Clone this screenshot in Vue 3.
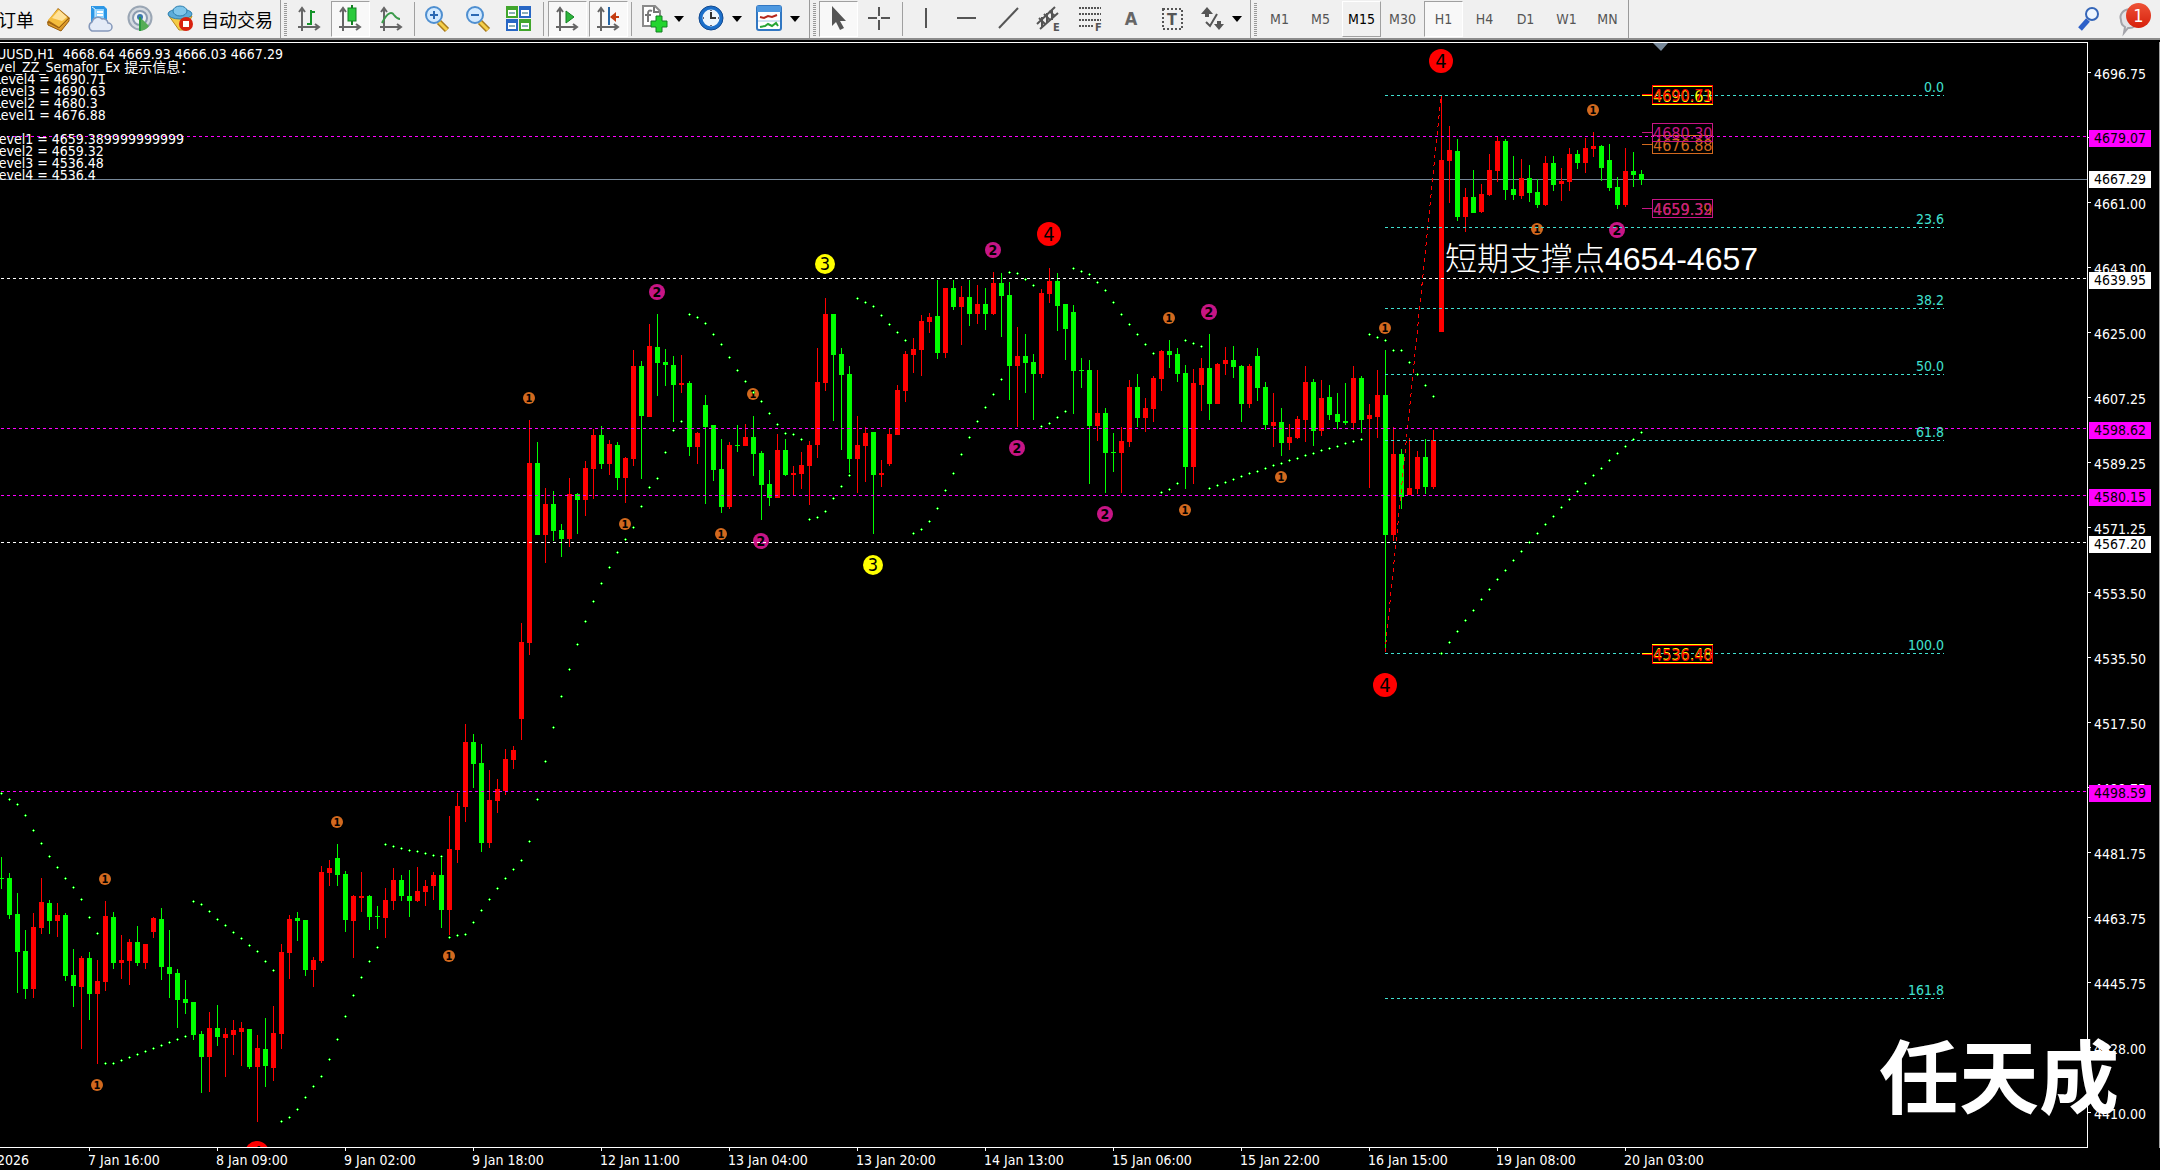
<script setup>
// Candles: [high, bodyTop, bodyBottom, low, rising]; one candle every 8px
const raw = [
  [857,878,879,889,0],[873,878,915,919,0],[893,914,952,993,0],[930,951,989,999,0],[913,927,989,998,1],[878,902,928,934,1],
  [900,903,921,934,0],[903,915,921,937,1],[913,915,976,981,0],[949,975,986,1007,0],[956,958,987,1049,1],[952,958,994,1020,0],
  [960,981,994,1064,1],[901,916,982,991,1],[912,917,963,969,0],[935,960,963,979,1],[939,942,961,985,1],[926,942,963,966,0],
  [944,944,963,969,1],[917,918,932,938,1],[908,919,967,980,0],[930,967,974,998,0],[969,973,1000,1028,0],[980,999,1003,1014,0],
  [1002,1002,1035,1040,0],[1031,1034,1057,1093,0],[1012,1028,1057,1092,1],[1005,1028,1037,1046,0],[1028,1034,1038,1077,1],[1020,1030,1035,1055,1],
  [1022,1028,1032,1066,1],[1029,1029,1067,1069,0],[1035,1048,1067,1122,1],[1018,1049,1066,1087,0],[1006,1033,1068,1081,1],[944,952,1034,1049,1],
  [915,919,953,979,1],[912,918,921,941,0],[920,920,970,976,0],[957,960,970,987,1],[866,872,961,963,1],[860,868,873,886,1],
  [844,858,875,886,0],[871,874,920,932,0],[895,896,921,958,1],[872,896,898,912,1],[895,896,917,930,0],[906,916,917,929,0],
  [888,900,918,938,1],[868,880,901,910,1],[875,880,896,901,0],[870,896,901,917,0],[867,891,901,902,1],[880,886,892,906,1],
  [872,875,886,900,1],[856,875,910,928,0],[816,849,910,935,1],[793,806,850,863,1],[724,742,807,822,1],[734,742,764,788,0],
  [744,763,843,852,0],[770,800,843,848,1],[779,789,801,813,1],[749,759,791,795,1],[746,750,760,769,1],[623,642,719,740,1],
  [420,463,643,655,1],[442,463,535,535,0],[488,504,535,563,1],[491,504,531,541,0],[524,530,539,557,0],[478,494,539,547,1],
  [493,494,500,534,0],[461,468,500,516,1],[429,435,469,499,1],[426,435,464,469,0],[440,444,464,475,1],[442,445,478,490,0],
  [457,458,478,503,1],[350,366,459,466,1],[361,366,416,479,0],[324,346,417,417,1],[314,347,363,396,0],[349,362,365,386,0],
  [356,365,385,422,0],[355,383,385,393,1],[381,383,447,456,0],[432,433,447,464,1],[395,405,427,504,0],[425,425,470,481,0],
  [439,469,507,513,0],[442,445,507,509,1],[425,445,446,452,0],[424,437,446,446,1],[416,437,454,476,0],[451,453,485,520,0],
  [470,484,498,506,0],[434,450,498,498,1],[439,450,475,476,0],[466,473,475,495,1],[452,465,474,489,1],[441,445,466,505,1],
  [348,382,445,458,1],[298,314,383,391,1],[314,314,355,421,0],[348,354,375,450,0],[366,374,459,473,0],[416,445,459,493,1],
  [427,433,446,482,1],[432,432,475,534,0],[460,473,475,487,1],[428,434,464,466,1],[385,390,435,435,1],[351,354,391,402,1],
  [338,349,355,373,1],[315,321,350,376,1],[313,317,322,333,1],[280,316,353,359,0],[288,288,353,358,1],[280,288,307,310,0],
  [286,297,307,345,1],[280,297,314,326,0],[285,304,314,324,1],[288,304,314,330,0],[272,283,314,315,1],[273,283,296,337,0],
  [282,295,366,400,0],[327,356,366,427,1],[334,356,363,393,0],[354,362,374,420,0],[289,293,374,378,1],[268,281,294,303,1],
  [273,281,306,331,0],[304,304,329,360,0],[305,312,371,414,0],[358,370,371,388,0],[360,370,426,484,0],[370,413,426,441,1],
  [408,413,453,493,0],[433,452,453,472,0],[427,441,453,493,1],[380,387,442,447,1],[374,387,418,427,0],[398,408,418,432,1],
  [376,378,409,422,1],[350,351,379,391,1],[340,351,355,368,0],[348,354,374,382,0],[365,373,467,489,0],[369,383,467,484,1],
  [358,368,385,411,1],[334,368,404,420,0],[363,364,404,404,1],[347,360,364,375,1],[346,360,367,378,0],[365,366,404,422,0],
  [364,366,404,408,1],[348,356,388,401,0],[382,387,425,430,0],[393,422,426,447,1],[408,422,443,456,0],[424,437,443,450,1],
  [416,419,438,439,1],[366,382,420,442,1],[379,382,431,446,0],[380,398,431,436,1],[385,397,415,420,0],[393,414,422,429,0],
  [383,421,423,425,0],[366,378,423,430,1],[376,378,420,433,0],[404,415,419,488,1],[370,395,417,438,1],[350,395,535,651,0],
  [427,454,535,541,1],[449,454,497,509,0],[438,488,495,495,1],[451,457,489,494,1],[439,457,487,494,0],[430,440,487,489,1],
  [96,160,332,332,1],[126,150,161,203,1],[139,151,217,221,0],[188,197,217,232,1],[170,197,213,213,0],[184,194,212,213,1],
  [154,170,195,196,1],[137,141,171,182,1],[139,141,190,200,0],[156,189,195,200,0],[159,178,196,199,1],[165,178,193,202,0],
  [179,192,205,208,0],[156,163,205,206,1],[156,163,185,191,0],[168,181,184,201,1],[148,154,182,191,1],[150,154,163,169,0],
  [138,148,163,173,1],[132,146,149,157,1],[145,146,168,181,0],[144,160,188,191,0],[177,187,205,209,0],[148,171,205,207,1],
  [152,171,175,187,0],[170,174,180,185,0],
]
const candles = raw.map(([high, top, bottom, low, rising], i) => ({
  x: 1 + 8 * i, high, top, bottom, low, color: rising ? '#ff0000' : '#00ff00',
}))

// Parabolic SAR, one value per candle
const sar = [
  793,799,804,815,830,843,856,867,878,887,899,917,933,
  1063,1063,1060,1057,1054,1051,1048,1045,1042,1039,1036,
  901,904,911,919,925,932,938,945,951,961,970,
  1121,1117,1109,1097,1086,1076,1059,1039,1016,995,977,961,947,
  844,846,848,850,851,853,855,856,
  937,935,934,922,910,899,888,878,869,860,841,799,761,727,696,
  669,644,621,601,583,567,552,539,527,506,487,478,452,430,421,
  314,317,323,334,344,357,370,381,392,401,413,424,433,434,439,
  519,517,511,498,486,475,
  298,302,306,315,324,332,340,
  533,529,521,508,490,473,454,437,421,407,394,379,
  272,273,279,285,426,423,417,411,
  268,271,274,282,290,302,314,324,334,344,353,
  492,489,483,340,343,346,
  488,485,482,479,476,473,471,468,465,463,460,458,455,453,450,448,446,443,441,439,
  334,337,340,350,350,362,374,385,396,
  653,642,631,620,610,599,589,579,570,560,551,542,533,524,516,507,499,491,483,475,468,460,453,446,439,432,
]

const levels = [
  { y: 136, color: '#ff00ff' }, { y: 278, color: '#ffffff' }, { y: 428, color: '#ff00ff' },
  { y: 495, color: '#ff00ff' }, { y: 542, color: '#ffffff' }, { y: 791, color: '#ff00ff' },
]

const fib = [
  { y: 95, label: '0.0' }, { y: 227, label: '23.6' }, { y: 308, label: '38.2' }, { y: 374, label: '50.0' },
  { y: 440, label: '61.8' }, { y: 653, label: '100.0' }, { y: 998, label: '161.8' },
]

const markerStyle = {
  1: { r: 6, color: '#d2691e', size: 11, dy: 4 },
  2: { r: 8, color: '#c71585', size: 14, dy: 5 },
  3: { r: 10, color: '#ffff00', size: 18, dy: 6 },
  4: { r: 12, color: '#ff0000', size: 20, dy: 7 },
}
const markers = [
  [1,337,822],[1,105,879],[1,97,1085],[1,449,956],[1,529,398],[1,625,524],[1,721,534],[1,753,394],
  [1,1169,318],[1,1281,477],[1,1185,510],[1,1385,328],[1,1593,110],[1,1537,229],
  [2,657,292],[2,993,250],[2,761,541],[2,1017,448],[2,1209,312],[2,1105,514],[2,1617,230],
  [3,825,264],[3,873,565],
  [4,1049,234],[4,1385,685],[4,1441,61],[4,257,1153],
].map(([n, x, y]) => ({ n, x, y, ...markerStyle[n] }))

const priceBoxes = [
  { y: 95, label: '4690.63', color: '#ffff00' }, { y: 94, label: '4690.71', color: '#ff0000' },
  { y: 144, label: '4676.88', color: '#d2691e' }, { y: 132, label: '4680.30', color: '#c71585' },
  { y: 208, label: '4659.39', color: '#d2691e' }, { y: 208, label: '4659.32', color: '#c71585' },
  { y: 653, label: '4536.48', color: '#ffff00' }, { y: 654, label: '4536.40', color: '#ff0000' },
]

const prices = ['4696.75', '', '4661.00', '4643.00', '4625.00', '4607.25', '4589.25', '4571.25', '4553.50',
  '4535.50', '4517.50', '4499.75', '4481.75', '4463.75', '4445.75', '4428.00', '4410.00']

const tags = [
  { top: 88, label: '4679.07', kind: 'pink' }, { top: 129, label: '4667.29', kind: 'white' },
  { top: 230, label: '4639.95', kind: 'white' }, { top: 380, label: '4598.62', kind: 'pink' },
  { top: 447, label: '4580.15', kind: 'pink' }, { top: 494, label: '4567.20', kind: 'white' },
  { top: 743, label: '4498.59', kind: 'pink' },
]

const times = ['7 Jan 16:00', '8 Jan 09:00', '9 Jan 02:00', '9 Jan 18:00', '12 Jan 11:00', '13 Jan 04:00',
  '13 Jan 20:00', '14 Jan 13:00', '15 Jan 06:00', '15 Jan 22:00', '16 Jan 15:00', '19 Jan 08:00', '20 Jan 03:00']

const axes = '<path d="M6 4v22M2 22h20M3 7l3-4 3 4M19 19l4 3-4 3" fill="none" stroke="#666" stroke-width="2"/>'
const lens = '<path d="M16 17l8 8" stroke="#a87a1c" stroke-width="6"/><path d="M16 17l8 8" stroke="#f5cf4a" stroke-width="3"/><circle cx="11" cy="10" r="8" fill="#d3eaff" stroke="#4f8fd0" stroke-width="2"/>'
const icons = {
  gold: '<path d="M2 17L13 3l12 10-9 13-13-6z" fill="#a86a12"/><path d="M3 15L13 4l10 9-9 9z" fill="#f4bd3d"/><path d="M7 13l7-8 8 7-5 4z" fill="#ffe29a"/><path d="M3 17l11 6 10-10v3L16 26 3 20z" fill="#dc9a2a" stroke="#996012"/>',
  cloud: '<path d="M5 1h13l3 3v15H5z" fill="#2c97e6"/><path d="M9 4h9v12H9z" fill="#8fd3ff"/><path d="M6 2l3 2v13" fill="none" stroke="#d8f0ff"/><path d="M11 7h6M11 10h6" stroke="#fff" stroke-width="2"/><path d="M6 26a5 5 0 010-9 6 6 0 0110-3 5 5 0 016 4 4 4 0 010 8z" fill="#e4ebf7" stroke="#8598ba" stroke-width="1.5"/>',
  signal: '<circle cx="13" cy="13" r="11.500" fill="#d5dae0" stroke="#9aa6b4" stroke-width="2"/><circle cx="13" cy="13" r="7" fill="#eef1f4" stroke="#8b9bb0" stroke-width="2"/><path d="M13 12l9 9a12 12 0 01-9 5z" fill="#57ad57"/><circle cx="13" cy="12" r="3" fill="#3b77ae"/><path d="M13 12v14" stroke="#2b9a3e" stroke-width="2"/>',
  auto: '<path d="M2 11h23l-7 14h-6z" fill="#f5cb45" stroke="#b88a1c"/><ellipse cx="13" cy="9" rx="12" ry="5" fill="#5cacd9" stroke="#2d7fae"/><ellipse cx="13" cy="6" rx="7" ry="5" fill="#80c6eb" stroke="#2d7fae"/><circle cx="19" cy="19" r="7" fill="#d8210f"/><rect x="16" y="16" width="6" height="6" fill="#fff"/>',
  bars: axes + '<path d="M11 19h4M15 5v15M15 7h4" fill="none" stroke="#15942a" stroke-width="2"/>',
  candle: axes + '<path d="M15 0v20" stroke="#138022" stroke-width="2"/><rect x="11" y="3" width="8" height="13" fill="#2acb3c" stroke="#138022"/>',
  line: axes + '<path d="M4 18C10 6 14 7 16 10q3 4 6 4" fill="none" stroke="#3a9a4a" stroke-width="2"/>',
  zoomIn: lens + '<path d="M7 10h8M11 6v8" stroke="#2a69b4" stroke-width="2"/>',
  zoomOut: lens + '<path d="M7 10h8" stroke="#2a69b4" stroke-width="2"/>',
  tile: '<path d="M1 1h12v12H1zM14 14h12v12H14z" fill="#41a62d"/><path d="M14 1h12v12H14zM1 14h12v12H1z" fill="#2867c4"/><path d="M3 5h8v6H3zM16 5h8v6h-8zM3 18h8v6H3zM16 18h8v6h-8z" fill="#fff"/><path d="M4 8h6M17 8h6M4 21h6M17 21h6" stroke="#8bb0b8" stroke-width="2"/>',
  shift: axes + '<path d="M12 6l8 6-8 6z" fill="#2cb53c" stroke="#138022"/>',
  autoscroll: axes + '<path d="M14 2v18" stroke="#2465a5" stroke-width="2"/><path d="M16 12h8" stroke="#c43c10" stroke-width="2"/><path d="M15 12l6-5v10z" fill="#c43c10"/>',
  add: '<path d="M3 1h12l5 5v15H3z" fill="#fff" stroke="#8a8a8a" stroke-width="2"/><path d="M14 2v5h5M12 6q-4-2-4 3v8M5 10h6" fill="none" stroke="#777" stroke-width="2"/><path d="M16 11h6v5h5v6h-5v5h-6v-5h-5v-6h5z" fill="#22d52e" stroke="#138022"/>',
  clock: '<circle cx="13" cy="13" r="12" fill="#1b6fca" stroke="#12498f"/><circle cx="13" cy="13" r="8.500" fill="#edf5fc"/><path d="M13 7v6h5" fill="none" stroke="#333" stroke-width="2"/><path d="M13 5v1M13 20v1M5 13h1M20 13h1" stroke="#667" stroke-width="2"/>',
  template: '<rect x="1" y="1" width="24" height="24" rx="2" fill="#fff" stroke="#3177c2" stroke-width="2"/><path d="M1 1h24v6H1z" fill="#4d98e0"/><path d="M4 12l4 1 4-2 4 1 5-2" fill="none" stroke="#b5271c" stroke-width="2"/><path d="M2 16h22" stroke="#a8c6e6"/><path d="M4 22l5-1 3-2 4 2 4-3 2 3" fill="none" stroke="#28a536" stroke-width="2"/>',
  cursor: '<path d="M7 1v20l4-4 4 8 4-2-4-7h6z" fill="#555"/>',
  cross: '<path d="M13 2v9M13 15v10M2 13h9M15 13h9" stroke="#555" stroke-width="2"/>',
  vline: '<path d="M13 3v20" stroke="#555" stroke-width="2"/>',
  hline: '<path d="M3 13h19" stroke="#555" stroke-width="2"/>',
  slash: '<path d="M4 23L23 3" stroke="#555" stroke-width="2"/>',
  channel: '<path d="M1 19L19 2M4 24L22 8M6 12v10M11 8v10M16 5v10M3 13l6 6M8 9l6 6M13 6l6 5" stroke="#555" stroke-width="2"/><text x="17" y="26" font-size="11" font-weight="700" fill="#555">E</text>',
  fibo: '<path d="M2 3h22M2 9h22M2 15h22M2 21h14" stroke="#555" stroke-width="2" stroke-dasharray="2 1"/><text x="18" y="26" font-size="11" font-weight="700" fill="#555">F</text>',
  text: '<text x="13" y="20" font-size="18" font-weight="700" fill="#666" text-anchor="middle">A</text>',
  label: '<rect x="4" y="4" width="19" height="20" fill="none" stroke="#555" stroke-width="2" stroke-dasharray="2 2"/><text x="13" y="20" font-size="16" font-weight="700" fill="#555" text-anchor="middle">T</text>',
  arrows: '<path d="M1 9l6-7 6 7H9v3H5V9zM14 19h3v-3h4v3h3l-5 6z" fill="#555"/><path d="M6 17l4 4 7-12" fill="none" stroke="#555" stroke-width="2"/>',
  search: '<path d="M11 15l-8 9" stroke="#2d60c8" stroke-width="5"/><circle cx="15" cy="9" r="6" fill="#eef6ff" stroke="#3566b8" stroke-width="2"/>',
  chat: '<path d="M3 15a9 8 0 1117 0 9 8 0 01-10 8l-4 5 1-6a9 8 0 01-4-7z" fill="#e2e2e6" stroke="#a4a4aa" stroke-width="2"/>',
}

const trade = ['gold', 'cloud', 'signal']
const chartTypes = [['bars'], ['candle', true], ['line']]
const zooms = ['zoomIn', 'zoomOut', 'tile']
const draw = ['vline', 'hline', 'slash', 'channel', 'fibo', 'text', 'label']
const frames = ['M1', 'M5', 'M15', 'M30', 'H1', 'H4', 'D1', 'W1', 'MN']
</script>

<template>
  <div class="terminal">
    <header class="toolbar">
      <div class="group first">
        <button class="order">订单</button>
        <button v-for="name in trade" :key="name" class="tool"><svg v-html="icons[name]" /></button>
        <button class="auto"><svg v-html="icons.auto" />自动交易</button>
      </div>
      <div class="group">
        <i class="grip"></i>
        <button v-for="[name, on] in chartTypes" :key="name" class="tool" :class="{ pressed: on }"><svg v-html="icons[name]" /></button>
        <i class="sep"></i>
        <button v-for="name in zooms" :key="name" class="tool"><svg v-html="icons[name]" /></button>
        <i class="sep wide"></i>
        <button class="tool pressed"><svg v-html="icons.shift" /></button>
        <button class="tool pressed"><svg v-html="icons.autoscroll" /></button>
        <i class="sep"></i>
        <button v-for="name in ['add', 'clock', 'template']" :key="name" class="tool drop"><svg v-html="icons[name]" /><i class="caret"></i></button>
      </div>
      <div class="group">
        <i class="grip"></i>
        <button class="tool pressed"><svg v-html="icons.cursor" /></button>
        <button class="tool"><svg v-html="icons.cross" /></button>
        <i class="sep"></i>
        <div class="drawing">
          <button v-for="name in draw" :key="name" class="tool"><svg v-html="icons[name]" /></button>
          <button class="tool drop tight"><svg v-html="icons.arrows" /><i class="caret"></i></button>
        </div>
      </div>
      <div class="group last">
        <i class="grip"></i>
        <button v-for="f in frames" :key="f" class="tool frame" :class="{ pressed: f === 'H1', hover: f === 'M15' }">{{ f }}</button>
      </div>
      <div class="right">
        <button class="tool"><svg v-html="icons.search" /></button>
        <button class="tool chat"><svg v-html="icons.chat" /><b class="badge">1</b></button>
      </div>
    </header>

    <main class="chart">
      <section class="plot">
        <svg class="canvas">
          <g transform="translate(0 -43)">
            <rect x="0" y="179" width="100%" height="1" fill="#778899" />
            <g v-for="c in candles" :key="c.x" :fill="c.color">
              <rect :x="c.x" :y="c.high" width="1" :height="c.low - c.high" />
              <rect :x="c.x - 2" :y="c.top" width="5" :height="c.bottom - c.top" />
            </g>
            <g v-for="(m, i) in markers" :key="i">
              <circle :cx="m.x" :cy="m.y" :r="m.r" :fill="m.color" />
              <text class="digit" :class="{ heavy: m.n < 3 }" :x="m.x" :y="m.y + m.dy" :font-size="m.size">{{ m.n }}</text>
            </g>
            <line class="trend" x1="1385" y1="652" x2="1441" y2="96" />
            <line v-for="l in levels" :key="l.y" class="dash" x1="1" x2="100%" :y1="l.y + 0.5" :y2="l.y + 0.5" :stroke="l.color" />
            <g v-for="f in fib" :key="f.y">
              <line class="dash" x1="1385" x2="1944" :y1="f.y + 0.5" :y2="f.y + 0.5" stroke="#40e0d0" />
              <text class="fib" x="1944" :y="f.y - 3">{{ f.label }}</text>
            </g>
            <g v-for="(y, i) in sar" :key="i">
              <path :d="`M${8 * i} ${y}h3v1h-3zM${8 * i + 1} ${y - 1}h1v3h-1z`" fill="#00ff00" />
              <rect :x="8 * i + 1" :y="y" width="1" height="1" fill="#ccffcc" />
            </g>
            <path d="M1653 43h15l-7 8z" fill="#778899" />
            <g v-for="b in priceBoxes" :key="b.label">
              <rect x="1642" :y="b.y" width="10" height="1" :fill="b.color" />
              <rect x="1652.5" :y="b.y - 8.5" width="60" height="18" fill="none" :stroke="b.color" />
              <text class="boxed" x="1653" :y="b.y + 7" :fill="b.color">{{ b.label }}</text>
            </g>
            <text class="note" x="1445" y="270">短期支撑点4654-4657</text>
          </g>
        </svg>
        <div class="info">
          <p class="title">UUSD,H1&nbsp; 4668.64 4669.93 4666.03 4667.29</p>
          <p>vel_ZZ_Semafor_Ex 提示信息：</p>
          <div class="upper">
            <p>Level4 = 4690.71</p>
            <p>Level3 = 4690.63</p>
            <p>Level2 = 4680.3</p>
            <p>Level1 = 4676.88</p>
          </div>
          <div class="lower">
            <p>Level1 = 4659.389999999999</p>
            <p>Level2 = 4659.32</p>
            <p>Level3 = 4536.48</p>
            <p>Level4 = 4536.4</p>
          </div>
        </div>
      </section>
      <aside class="prices">
        <ol>
          <li v-for="(p, i) in prices" :key="i">{{ p }}</li>
        </ol>
        <span v-for="t in tags" :key="t.label" class="tag" :class="t.kind" :style="{ top: t.top + 'px' }">{{ t.label }}</span>
      </aside>
      <footer class="times">
        <span class="year">2026</span>
        <span v-for="t in times" :key="t" class="time">{{ t }}</span>
      </footer>
      <div class="signature">任天成</div>
    </main>
  </div>
</template>

<style>
body {
  margin: 0;
  background: #000;
}
</style>

<style scoped>
.terminal {
  display: flex;
  flex-direction: column;
  min-height: 100vh;
  overflow: hidden;
  background: #000;
  color: #fff;
  font: 14px/14px "DejaVu Sans Condensed", "Noto Sans CJK SC", sans-serif;
}
.toolbar {
  display: flex;
  height: 38px;
  flex: none;
  background: #f0f0f0;
  border-bottom: 2px solid #8c8c8c;
}
.group {
  display: flex;
  align-items: center;
  padding-right: 2px;
  border-right: 1px solid #9a9a9a;
}
.group.last {
  padding-right: 0;
}
.drawing {
  display: flex;
  margin-left: 2px;
}
button {
  display: flex;
  align-items: center;
  justify-content: center;
  box-sizing: border-box;
  height: 36px;
  padding: 0;
  border: 0;
  background: none;
  color: #000;
  font: inherit;
  white-space: nowrap;
}
button svg {
  width: 28px;
  height: 28px;
  flex: none;
  overflow: visible;
}
.order,
.auto {
  font: 18px/24px "Noto Sans CJK SC", sans-serif;
}
.order {
  width: 38px;
  justify-content: flex-end;
  padding-right: 4px;
}
.auto {
  width: 117px;
  gap: 6px;
  padding-left: 6px;
  justify-content: flex-start;
}
.tool {
  position: relative;
  width: 39px;
  margin: 0 1px;
}
.drop {
  width: 56px;
  justify-content: flex-start;
  gap: 6px;
  padding-left: 6px;
}
.drop.tight {
  width: 53px;
  gap: 4px;
}
.caret {
  border: 5px solid transparent;
  border-top: 6px solid #000;
  border-bottom: 0;
}
.pressed {
  background: #f8f8f8;
  border: 1px solid #a0a0a0;
  border-right-color: #fff;
  border-bottom-color: #fff;
}
.hover {
  border: 1px solid #fff;
  border-right-color: #a0a0a0;
  border-bottom-color: #a0a0a0;
}
.frame {
  color: #555;
}
.frame.hover {
  color: #000;
}
.grip {
  width: 3px;
  height: 33px;
  margin: 0 2px 0 3px;
  background: repeating-linear-gradient(#999 0 1px, #f0f0f0 1px 2px);
}
.sep {
  width: 1px;
  height: 34px;
  margin: 0 1px 0 2px;
  background: #a0a0a0;
}
.sep.wide {
  margin: 0 3px 0 4px;
}
.right {
  display: flex;
  align-items: center;
  margin-left: auto;
  padding-right: 8px;
}
.badge {
  position: absolute;
  top: 2px;
  right: 0;
  width: 25px;
  height: 25px;
  border-radius: 50%;
  background: linear-gradient(#ee5236, #d6200c);
  color: #fff;
  font: 18px/25px "DejaVu Sans Condensed", sans-serif;
}
.chart {
  position: relative;
  display: grid;
  flex: 1;
  margin-top: 2px;
  grid-template-columns: 1fr 72px;
  grid-template-rows: 1fr 22px;
}
.plot {
  position: relative;
  border: 1px solid #fff;
  border-left: 0;
  overflow: hidden;
}
.canvas {
  position: absolute;
  width: 100%;
  height: 100%;
}
.dash {
  stroke-dasharray: 3 3;
}
.trend {
  stroke: #ff0000;
  stroke-dasharray: 4 4;
  shape-rendering: crispEdges;
}
.digit {
  text-anchor: middle;
  fill: #000;
}
.heavy {
  font-weight: 700;
}
.fib {
  fill: #40e0d0;
  text-anchor: end;
}
.boxed {
  font-size: 16px;
}
.note {
  fill: #fff;
  font: 300 32px "Liberation Sans", "Noto Sans CJK SC", sans-serif;
}
.info {
  position: absolute;
  top: 4px;
  left: -3px;
  white-space: nowrap;
}
.info p {
  height: 12px;
  margin: 0;
}
.info .title {
  height: 13px;
}
.upper {
  margin-left: -3px;
}
.lower {
  margin: 12px 0 0 -5px;
}
.prices {
  position: relative;
  border-right: 1px solid #a0a0a0;
}
.prices ol {
  margin: 0;
  padding: 0;
  list-style: none;
}
.prices li {
  position: relative;
  height: 65px;
  padding-left: 6px;
  line-height: 64px;
}
.prices li::before {
  content: "";
  position: absolute;
  top: 30px;
  left: 0;
  width: 3px;
  height: 1px;
  background: #fff;
}
.tag {
  position: absolute;
  left: 1px;
  width: 57px;
  height: 17px;
  padding-left: 5px;
  color: #000;
  line-height: 17px;
}
.pink {
  background: #ff00ff;
}
.white {
  background: #fff;
}
.times {
  grid-column: 1 / -1;
  display: flex;
  overflow: hidden;
  line-height: 24px;
}
.times span {
  position: relative;
  flex: none;
  width: 128px;
}
.times .year {
  width: 88px;
  text-indent: -3px;
}
.time::before {
  content: "";
  position: absolute;
  top: 0;
  left: 1px;
  width: 1px;
  height: 3px;
  background: #fff;
}
.signature {
  position: absolute;
  right: 41px;
  bottom: 50px;
  color: #fff;
  font: 700 80px/96px "Noto Sans CJK SC", sans-serif;
}
</style>
